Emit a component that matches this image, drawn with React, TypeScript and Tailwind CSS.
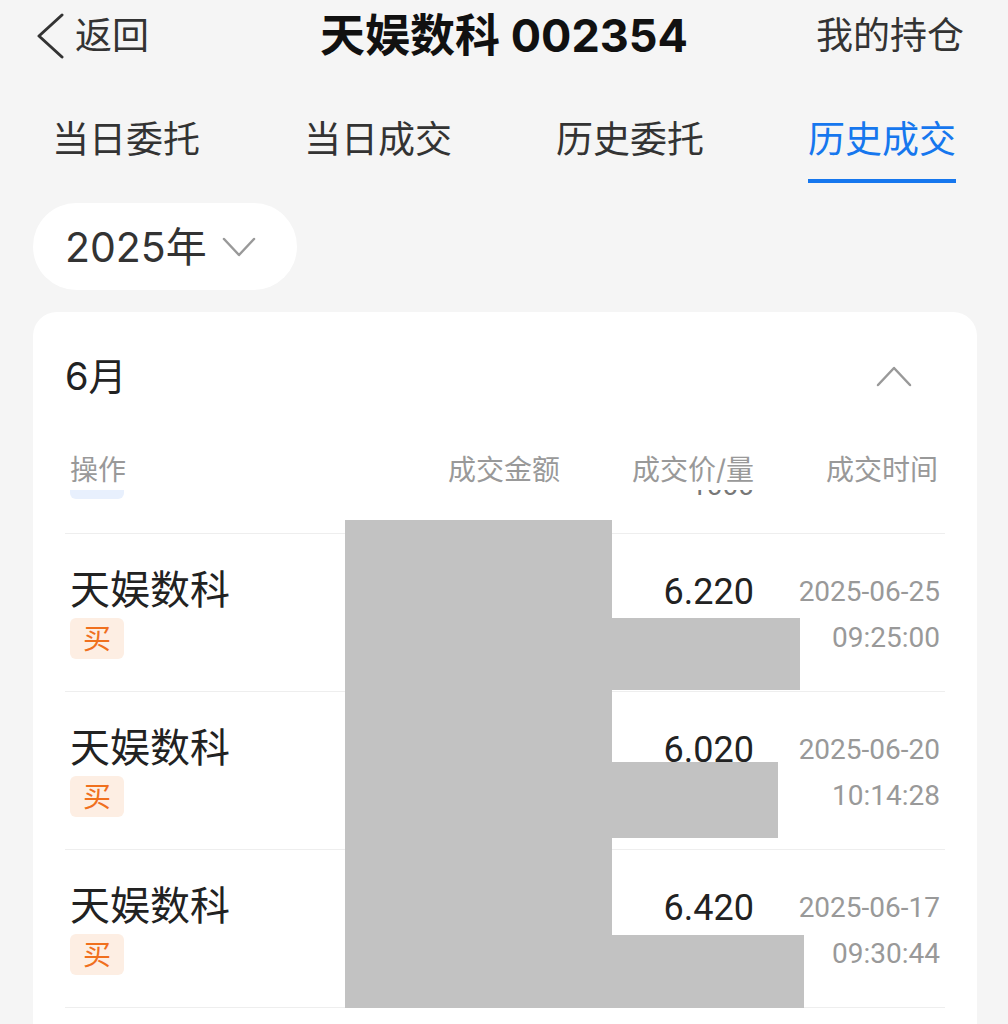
import React from 'react';

const tabs = ['当日委托', '当日成交', '历史委托', '历史成交'];

const trades = [
  { name: '天娱数科', side: '买', price: '6.220', date: '2025-06-25', time: '09:25:00' },
  { name: '天娱数科', side: '买', price: '6.020', date: '2025-06-20', time: '10:14:28' },
  { name: '天娱数科', side: '买', price: '6.420', date: '2025-06-17', time: '09:30:44' },
];

const App: React.FC = () => {
  return (
    <div className="relative min-h-screen overflow-hidden bg-[#f5f5f5] font-['Inter','Noto_Sans_CJK_SC',sans-serif] text-[#222]">
      {/* Top bar */}
      <div className="grid h-[72px] grid-cols-[1fr_auto_1fr] items-center">
        <div className="flex items-center pl-[37px]">
          <svg width="28" height="46" viewBox="0 0 28 46" fill="none">
            <path d="M25 2 L2 23 L25 44" stroke="#333" strokeWidth="3" strokeLinecap="round" strokeLinejoin="round" />
          </svg>
          <span className="ml-[10px] text-[37px] leading-[48px] text-[#333]">返回</span>
        </div>
        <div className="whitespace-nowrap text-[45px] font-bold leading-[56px] text-[#111]">
          天娱数科 <span>002354</span>
        </div>
        <div className="flex justify-end pr-[44px]">
          <span className="text-[37px] leading-[48px] text-[#333]">我的持仓</span>
        </div>
      </div>

      {/* Tabs */}
      <div className="grid grid-cols-4 pt-[44px]">
        {tabs.map((t, i) => (
          <div key={t} className="flex justify-center">
            <div className="inline-flex flex-col items-center">
              <span className={`whitespace-nowrap text-[37px] leading-[48px] ${i === 3 ? 'text-[#1677ee]' : 'text-[#333]'}`}>{t}</span>
              <div className={`mt-[15px] h-[4px] w-full ${i === 3 ? 'bg-[#1677ee]' : 'bg-transparent'}`} />
            </div>
          </div>
        ))}
      </div>

      {/* Year selector */}
      <div className="ml-[33px] mt-[20px] flex h-[87px] w-[264px] items-center rounded-full bg-white pl-[32px]">
        <span className="whitespace-nowrap text-[41px] leading-[48px] text-[#333]">2025年</span>
        <svg className="ml-[15px]" width="34" height="22" viewBox="0 0 34 22" fill="none">
          <polyline points="2,3 17,19 32,3" stroke="#999" strokeWidth="2.5" strokeLinecap="round" strokeLinejoin="round" />
        </svg>
      </div>

      {/* Month card */}
      <div className="ml-[33px] mt-[22px] w-[944px] rounded-t-[24px] bg-white px-[32px] pb-[40px]">
        <div className="flex h-[128px] items-center justify-between pr-[33px]">
          <span className="text-[38px] leading-[48px] text-[#222]">6月</span>
          <svg width="36" height="22" viewBox="0 0 36 22" fill="none">
            <polyline points="2,20 18,3 34,20" stroke="#999" strokeWidth="2.5" strokeLinecap="round" strokeLinejoin="round" />
          </svg>
        </div>

        <div className="flex whitespace-nowrap px-[5px] pt-[10px] text-[28px] leading-[40px] text-[#999]">
          <span className="flex-1">操作</span>
          <span className="w-[111px]">成交金额</span>
          <span className="w-[195px] text-right">成交价/量</span>
          <span className="w-[186px] pr-[2px] text-right">成交时间</span>
        </div>

        {/* scrolled row peeking under the header */}
        <div className="flex h-[10px] overflow-hidden px-[5px]">
          <div className="flex-1">
            <div className="mt-[-32px] h-[41px] w-[54px] rounded-[6px] bg-[#e8f0fd]" />
          </div>
          <div className="w-[200px] text-right">
            <div className="mt-[-18px] font-['Roboto',sans-serif] text-[28px] leading-[28px] text-[#777]">1000</div>
          </div>
          <div className="w-[186px]" />
        </div>

        <div className="mt-[33px] border-b border-[#eeeeee]">
          {trades.map((r) => (
            <div key={r.date} className="flex h-[158px] border-t border-[#eeeeee] px-[5px]">
              <div className="flex flex-1 flex-col pt-[32px]">
                <span className="whitespace-nowrap text-[40px] leading-[48px] text-[#222]">{r.name}</span>
                <span className="mt-[4px] flex h-[41px] w-[54px] items-center justify-center rounded-[6px] bg-[#fdeee3] text-[28px] text-[#f0701e]">
                  {r.side}
                </span>
              </div>
              <div className="w-[200px] pt-[34px] text-right font-['Roboto',sans-serif] text-[36px] leading-[48px] text-[#222]">
                {r.price}
              </div>
              <div className="flex w-[186px] flex-col items-end pt-[35px] font-['Roboto',sans-serif] text-[28px] leading-[46px] text-[#999]">
                <span>{r.date}</span>
                <span>{r.time}</span>
              </div>
            </div>
          ))}
        </div>
      </div>

      {/* redaction blocks over the amount / volume columns */}
      <div className="absolute left-[345px] top-[520px] h-[488px] w-[267px] bg-[#c2c2c2]" />
      <div className="absolute left-[612px] top-[618px] h-[72px] w-[188px] bg-[#c2c2c2]" />
      <div className="absolute left-[612px] top-[762px] h-[76px] w-[166px] bg-[#c2c2c2]" />
      <div className="absolute left-[612px] top-[935px] h-[73px] w-[192px] bg-[#c2c2c2]" />
    </div>
  );
};

export default App;
